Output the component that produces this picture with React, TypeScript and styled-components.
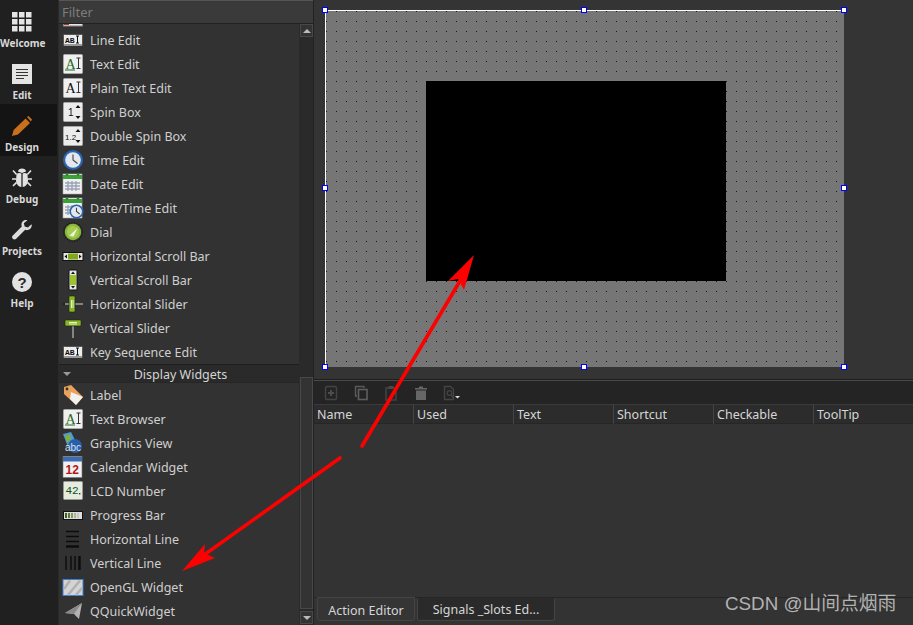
import React from "react";
import styled, { createGlobalStyle } from "styled-components";

const GlobalStyle = createGlobalStyle`
  html, body {
    margin: 0;
    padding: 0;
    background: #333;
    overflow: hidden;
  }
  * { box-sizing: border-box; }
`;

const uiFont = `"Noto Sans", "Open Sans", sans-serif`;

const Page = styled.div`
  position: relative;
  width: 913px;
  height: 625px;
  display: grid;
  grid-template-columns: 58px 256px 599px;
  overflow: hidden;
  color: #d6d6d6;
  font-family: ${uiFont};
  font-size: 12.5px;
`;

/* mode selector on the far left */
const ModeBar = styled.nav`
  display: flex;
  flex-direction: column;
  background: #202020;
`;

const ModeButton = styled.div<{ $active?: boolean }>`
  height: 52px;
  width: 44px;
  display: flex;
  flex-direction: column;
  align-items: center;
  padding-top: 12px;
  position: relative;
  z-index: 0;
  svg { display: block; }
  &::before {
    content: "";
    position: absolute;
    z-index: -1;
    left: 0;
    top: 0;
    width: 57px;
    height: 52px;
    background: ${(p) => (p.$active ? "#141414" : "transparent")};
  }
`;

const ModeLabel = styled.span`
  margin-top: 4px;
  width: 44px;
  text-align: center;
  font-size: 10px;
  line-height: 15px;
  font-weight: 700;
  color: #d8d8d8;
  white-space: nowrap;
`;

/* widget box */
const Palette = styled.aside`
  display: flex;
  flex-direction: column;
  min-height: 0;
  background: #323232;
  border-left: 1px solid #2a2a2a;
  border-right: 1px solid #222;
`;

const FilterBar = styled.div`
  height: 24px;
  flex: none;
  padding: 3px 0 0 3px;
  background: #3a3a3a;
  border-top: 1px solid #555;
  border-bottom: 1px solid #222;
  color: #7d7d7d;
  font-size: 13px;
  line-height: 17px;
`;

const PaletteBody = styled.div`
  flex: 1;
  min-height: 0;
  display: flex;
`;

const WidgetList = styled.div`
  flex: 1;
  min-width: 0;
  overflow: hidden;
  display: flex;
  flex-direction: column;
`;

const WidgetRow = styled.div<{ $clipped?: boolean }>`
  flex: none;
  height: 24px;
  display: flex;
  align-items: center;
  gap: 6px;
  padding-left: 3px;
  margin-top: ${(p) => (p.$clipped ? "-20px" : "0")};
  white-space: nowrap;
  color: #cfcfcf;
  svg { display: block; flex: none; }
`;

const Category = styled.div`
  flex: none;
  height: 19px;
  display: flex;
  align-items: center;
  justify-content: center;
  background: #2a2a2a;
  border-top: 1px solid #1e1e1e;
  border-bottom: 1px solid #262626;
  color: #d4d4d4;
  position: relative;
  padding: 1px 0 0 3px;
`;

const CategoryArrow = styled.span`
  position: absolute;
  left: 4px;
  top: 7px;
  width: 0;
  height: 0;
  border-left: 4px solid transparent;
  border-right: 4px solid transparent;
  border-top: 4px solid #999;
`;

const ScrollBar = styled.div`
  flex: none;
  width: 14px;
  display: flex;
  flex-direction: column;
  background: #2a2a2a;
  padding-bottom: 1px;
`;

const ScrollButton = styled.div`
  flex: none;
  height: 13px;
  margin-left: 1px;
  display: flex;
  align-items: center;
  justify-content: center;
  background: #333;
  border: 1px solid #484848;
`;

const ScrollGlyph = styled.span<{ $up?: boolean }>`
  width: 0;
  height: 0;
  border-left: 4px solid transparent;
  border-right: 4px solid transparent;
  ${(p) => (p.$up ? "border-bottom: 4px solid #bbb;" : "border-top: 4px solid #bbb;")}
`;

const ScrollTrack = styled.div`
  flex: 1;
  display: flex;
  flex-direction: column;
  padding: 340px 0 2px 1px;
`;

const ScrollHandle = styled.div`
  flex: 1;
  background: #333;
  border: 1px solid #484848;
`;

/* right side: form canvas on top, action editor below */
const Workspace = styled.main`
  display: flex;
  flex-direction: column;
  min-width: 0;
  background: #333;
`;

const FormArea = styled.section`
  height: 380px;
  flex: none;
  padding: 10px 0 0 11px;
  background: #343434;
  border-bottom: 1px solid #1e1e1e;
`;

const FormCanvas = styled.div`
  position: relative;
  width: 519px;
  height: 357px;
  border-top: 1px solid #fff;
  border-left: 1px solid #fff;
  background-color: #767676;
  background-image: radial-gradient(circle at 0.5px 0.5px, #161616 0.65px, transparent 0.9px);
  background-size: 10px 10px;
`;

const GlWidget = styled.div`
  position: absolute;
  left: 100px;
  top: 70px;
  width: 300px;
  height: 200px;
  background: #000;
`;

const Handle = styled.span<{ $x: string; $y: string }>`
  position: absolute;
  left: ${(p) => p.$x};
  top: ${(p) => p.$y};
  width: 6px;
  height: 6px;
  margin: -4px 0 0 -4px;
  background: #fff;
  border: 1px solid #0000ff;
`;

const ActionToolbar = styled.div`
  height: 24px;
  flex: none;
  display: flex;
  align-items: center;
  gap: 14px;
  padding-left: 9px;
  background: #242424;
  border-top: 1px solid #4a4a4a;
  svg { display: block; flex: none; }
`;

const TableHeader = styled.div`
  height: 20px;
  flex: none;
  display: grid;
  grid-template-columns: repeat(6, 100px);
  background: #2c2c2c;
  border-top: 1px solid #3a3a3a;
  border-bottom: 1px solid #262626;
`;

const HeaderCell = styled.div`
  padding-left: 3px;
  line-height: 20px;
  color: #d6d6d6;
  white-space: nowrap;
  border-right: 1px solid #444;
  &:last-child { border-right: 0; }
`;

const TableBody = styled.div`
  flex: 1;
  background: #333;
`;

const TabStrip = styled.div`
  height: 28px;
  flex: none;
  display: flex;
  align-items: flex-start;
  gap: 2px;
  padding-left: 3px;
  background: #333;
  border-top: 1px solid #262626;
`;

const Tab = styled.div<{ $active?: boolean; $width: number }>`
  width: ${(p) => p.$width}px;
  height: ${(p) => (p.$active ? 24 : 23)}px;
  margin-top: ${(p) => (p.$active ? -1 : 0)}px;
  text-align: center;
  line-height: ${(p) => (p.$active ? 26 : 22)}px;
  white-space: nowrap;
  background: ${(p) => (p.$active ? "#353535" : "#2a2a2a")};
  border: 1px solid #444;
  border-top-color: ${(p) => (p.$active ? "#444" : "#2a2a2a")};
  border-radius: 0 0 3px 3px;
  color: #d6d6d6;
`;

const Watermark = styled.div`
  position: absolute;
  left: 725px;
  top: 591px;
  font-family: "Liberation Sans", "Noto Sans CJK SC", sans-serif;
  font-size: 18.8px;
  line-height: 26px;
  color: #b2b2b2;
  white-space: nowrap;
`;

const ArrowLayer = styled.svg`
  position: absolute;
  left: 0;
  top: 0;
  pointer-events: none;
`;

/* ---- sidebar icons ---- */

const WelcomeIcon = () => (
  <svg width="20" height="20" viewBox="0 0 20 20" fill="#e4e4e4">
    {[0, 7, 14].flatMap((y) =>
      [0, 7, 14].map((x) => <rect key={`${x}-${y}`} x={x} y={y} width="5.5" height="5.5" />)
    )}
  </svg>
);

const EditIcon = () => (
  <svg width="20" height="20" viewBox="0 0 20 20">
    <rect width="20" height="20" fill="#e4e4e4" />
    <path d="M4 5.5h12M4 8.5h12M4 11.5h12M4 14.5h8" stroke="#333" strokeWidth="1" />
  </svg>
);

const PencilIcon = () => (
  <svg width="20" height="20" viewBox="0 0 20 20">
    <path d="M0 20l1.6-6L13.6 2.4l4.4 4.6L6 18.4z" fill="#c8701c" />
    <path d="M15 1l1.5-1L20 3.5 18.8 5.6z" fill="#c8701c" />
  </svg>
);

const BugIcon = () => (
  <svg width="20" height="20" viewBox="0 0 20 20" fill="#e2e2e2">
    <path d="M6 3.5C6 1.5 8 .5 10 .5s4 1 4 3L10 5z" />
    <path d="M4.6 6C6 4.8 8 4.6 9.4 5.6V19C6.6 19 4 16 4 12z" />
    <path d="M15.4 6C14 4.8 12 4.6 10.6 5.6V19C13.4 19 16 16 16 12z" />
    <path d="M1 2.5l3.6 4M19 2.5l-3.6 4M0 11h4M20 11h-4M1 18l3.6-3.6M19 18l-3.6-3.6" stroke="#e2e2e2" strokeWidth="1.6" fill="none" />
  </svg>
);

const WrenchIcon = () => (
  <svg width="20" height="20" viewBox="0 0 20 20">
    <path d="M19.5 4.2l-3.6 3.2-3.2-1 -.9-3.2L15.4.2C12.8-.6 9.6 1 9.4 4.2c0 1 .2 1.8.4 2.4L.8 15.4c-1 1 -1 2.4 0 3.4s2.4 1 3.4 0l9-9c.8.3 1.6.4 2.4.3 3-.4 4.8-3.2 3.9-5.9z" fill="#dcdcdc" />
  </svg>
);

const HelpIcon = () => (
  <svg width="20" height="20" viewBox="0 0 20 20">
    <circle cx="10" cy="10" r="10" fill="#e2e2e2" />
    <text x="10" y="15.5" textAnchor="middle" fontFamily="Liberation Sans, sans-serif" fontWeight="700" fontSize="15" fill="#2a2a2a">?</text>
  </svg>
);

/* ---- widget box icons, all on a 22px square ---- */

const Ico: React.FC<{ children: React.ReactNode }> = ({ children }) => (
  <svg width="22" height="22" viewBox="0 0 22 22">{children}</svg>
);

const MiniText: React.FC<{ x: number; y: number; size: number; fill?: string; family?: string; weight?: number; children: React.ReactNode }> = ({
  x, y, size, fill = "#111", family = "Liberation Sans, sans-serif", weight = 400, children,
}) => (
  <text x={x} y={y} fontSize={size} fill={fill} fontFamily={family} fontWeight={weight}>{children}</text>
);

const LineEditIcon = () => (
  <Ico>
    <rect x="1.5" y="5.5" width="19" height="11" rx="1" fill="#ececec" stroke="#555" />
    <rect x="2" y="15" width="18" height="2" fill="#999" />
    <MiniText x={3} y={13.5} size={8} family="Liberation Mono, monospace" weight={700}>AB</MiniText>
    <path d="M14 7h3M14 14h3M15.5 7v7" stroke="#111" strokeWidth="1" />
  </Ico>
);

const AiIcon = ({ color }: { color: string }) => (
  <Ico>
    <rect x="1.5" y="1.5" width="19" height="19" rx="1" fill="#f0f0f0" stroke="#a8a8a8" />
    <MiniText x={3.5} y={15.5} size={14} fill={color} family="Liberation Serif, serif">A</MiniText>
    {color !== "#111" && <path d="M3 17h10" stroke={color} />}
    <path d="M14.5 5h4M14.5 15.5h4M16.5 5v10.5" stroke="#333" strokeWidth="1" />
  </Ico>
);

const SpinIcon = ({ label }: { label: string }) => (
  <Ico>
    <rect x="1.5" y="1.5" width="19" height="19" rx="1" fill="#ececec" stroke="#a8a8a8" />
    <MiniText x={label.length > 1 ? 3 : 6} y={15} size={label.length > 1 ? 8 : 10}>{label}</MiniText>
    <path d="M13.5 7l2.5-3L18.5 7zM13.5 15l2.5 3 2.5-3z" fill="#111" />
  </Ico>
);

const ClockFace = ({ cx, cy, r }: { cx: number; cy: number; r: number }) => (
  <>
    <circle cx={cx} cy={cy} r={r} fill="#2a64b4" />
    <circle cx={cx} cy={cy} r={r * 0.78} fill="#e4e8ee" />
    <path d={`M${cx} ${cy - r * 0.55}V${cy}L${cx + r * 0.45} ${cy + r * 0.35}`} stroke="#444" strokeWidth="1.1" fill="none" />
  </>
);

const CalendarBase = () => (
  <>
    <rect x="1" y="1" width="19" height="20" fill="#f0f0f0" stroke="#aaa" strokeWidth="0.6" />
    <rect x="1" y="2" width="19" height="4" fill="#3aa03a" />
    <circle cx="5" cy="1.5" r="1.2" fill="#2b8030" />
    <circle cx="16" cy="1.5" r="1.2" fill="#2b8030" />
    <path d="M3 10h15M3 13h15M3 16h15M6 8v10M10 8v10M14 8v10" stroke="#9aa3b8" strokeWidth="1.4" />
  </>
);

const DateIcon = () => <Ico><CalendarBase /></Ico>;
const TimeIcon = () => <Ico><ClockFace cx={11} cy={11} r={10} /></Ico>;
const DateTimeIcon = () => (
  <Ico>
    <CalendarBase />
    <ClockFace cx={14.5} cy={14.5} r={7} />
  </Ico>
);

const DialIcon = () => (
  <Ico>
    <circle cx="11" cy="11" r="9.4" fill="none" stroke="#1a1a1a" strokeWidth="1.6" strokeDasharray="1 1.5" />
    <circle cx="11" cy="11" r="8.2" fill="#8cb83a" />
    <circle cx="11" cy="11" r="6" fill="#a4cc52" />
    <path d="M7.5 14.5L15.5 7l-4 8.5z" fill="#eef4dc" />
  </Ico>
);

const HScrollIcon = () => (
  <Ico>
    <rect x="1" y="7.5" width="20" height="8" fill="#e6e6e6" stroke="#111" />
    <rect x="6" y="8.5" width="10" height="6" fill="#7fa81e" />
    <path d="M2.5 11.5l2.5-2v4zM19.5 11.5l-2.5-2v4z" fill="#111" />
  </Ico>
);

const VScrollIcon = () => (
  <Ico>
    <rect x="7" y="1" width="8" height="20" rx="1" fill="#e6e6e6" stroke="#111" />
    <rect x="8" y="6" width="6" height="10" fill="#9cc42a" />
    <path d="M11 2.5l-2 2.5h4zM11 19.5l-2-2.5h4z" fill="#111" />
  </Ico>
);

const HSliderIcon = () => (
  <Ico>
    <path d="M1 11h20" stroke="#9a9a9a" strokeWidth="1.6" />
    <rect x="1" y="10" width="2" height="2" fill="#222" />
    <rect x="7" y="3" width="6" height="16" rx="1" fill="#8ab42a" stroke="#1a2a08" strokeWidth="0.6" />
    <path d="M9.5 7v8M11 7v8" stroke="#e6f0c8" />
  </Ico>
);

const VSliderIcon = () => (
  <Ico>
    <path d="M11 5v16" stroke="#9a9a9a" strokeWidth="1.6" />
    <rect x="3" y="3" width="16" height="6" rx="1" fill="#8ab42a" stroke="#1a2a08" strokeWidth="0.6" />
    <path d="M7 5.5h8M7 7h8" stroke="#e6f0c8" />
  </Ico>
);

const LabelIcon = () => (
  <Ico>
    <path d="M2 3l7-2 12 12-7 8L2 10z" fill="#e9a25a" />
    <path d="M9 8l12 5-7 8-6-6z" fill="#f1f1f1" />
    <circle cx="5" cy="5" r="1.4" fill="#333" />
  </Ico>
);

const GraphicsIcon = () => (
  <Ico>
    <path d="M1 2l8-2 4 8-7 7z" fill="#4f9ad8" />
    <path d="M3 4l5-2 1 5-4 4z" fill="#7fb03a" />
    <circle cx="13" cy="14" r="7" fill="#2a5ea8" />
    <MiniText x={3} y={19} size={10} fill="#d8e2f0">abc</MiniText>
  </Ico>
);

const CalendarIcon = () => (
  <Ico>
    <rect x="1" y="0.5" width="19" height="21" fill="#f1f1f1" stroke="#777" strokeWidth="0.6" />
    <rect x="1" y="1" width="19" height="4.5" fill="#3b6cb4" />
    <MiniText x={3.5} y={18} size={12} fill="#b01818" weight={700}>12</MiniText>
  </Ico>
);

const LcdIcon = () => (
  <Ico>
    <rect x="1.5" y="1.5" width="19" height="18" rx="1" fill="#e6ebe0" stroke="#999" />
    <MiniText x={3.5} y={14} size={11} fill="#14501a" family="Liberation Mono, monospace">42</MiniText>
    <rect x="17" y="13" width="1.4" height="1.4" fill="#14501a" />
  </Ico>
);

const ProgressIcon = () => (
  <Ico>
    <rect x="1.5" y="7.5" width="19" height="8" fill="#ddd" stroke="#111" />
    <rect x="3" y="9" width="2" height="5" fill="#445f20" />
    <rect x="6" y="9" width="2" height="5" fill="#5a7a2c" />
    <rect x="9" y="9" width="2" height="5" fill="#84986a" />
    <rect x="12" y="9" width="2" height="5" fill="#aab49a" />
    <rect x="15" y="9" width="2" height="5" fill="#c4c8bc" />
  </Ico>
);

const HLineIcon = () => (
  <Ico>
    <path d="M4 3.5h13M4 8.5h13M4 13.5h13" stroke="#0c0c0c" strokeWidth="1.6" />
    <path d="M4 18.5h13" stroke="#0c0c0c" strokeWidth="2.4" />
  </Ico>
);

const VLineIcon = () => (
  <Ico>
    <path d="M4 4v14M9 4v14M13 4v14" stroke="#0c0c0c" strokeWidth="1.4" />
    <path d="M17.5 4v14" stroke="#0c0c0c" strokeWidth="2.4" />
  </Ico>
);

const OpenGlIcon = () => (
  <Ico>
    <rect x="1" y="3.5" width="20" height="16" fill="#d4d4d4" stroke="#3f7fd0" strokeWidth="1" />
    <path d="M2 13L8 4.5M6 19L18 4.5M14 19l6-7" stroke="#b2b2b2" strokeWidth="2.6" />
  </Ico>
);

const QuickIcon = () => (
  <Ico>
    <path d="M3 13L20 3l-3 16-5-5z" fill="#b4b4b4" />
    <path d="M3 13l9 1 8-11z" fill="#8a8a8a" />
  </Ico>
);

const FontComboIcon = () => (
  <Ico>
    <rect x="1.5" y="1" width="19" height="20" fill="#e6e6e6" stroke="#888" />
    <rect x="2" y="17" width="5" height="3" fill="#b03030" />
  </Ico>
);

/* ---- action editor toolbar icons (disabled look) ---- */

const ToolNew = () => (
  <svg width="16" height="16" viewBox="0 0 16 16">
    <rect x="2.5" y="1.5" width="11" height="13" rx="1.5" fill="none" stroke="#444" strokeWidth="1.4" />
    <path d="M8 5v6M5 8h6" stroke="#4c4c4c" strokeWidth="2" />
  </svg>
);

const ToolCopy = () => (
  <svg width="16" height="16" viewBox="0 0 16 16" fill="none">
    <path d="M11 3V1.5H2.5V11H4" stroke="#5a5a5a" strokeWidth="1.4" />
    <rect x="5.5" y="4.5" width="8.5" height="10" stroke="#5e5e5e" strokeWidth="1.6" />
  </svg>
);

const ToolPaste = () => (
  <svg width="16" height="16" viewBox="0 0 16 16" fill="none">
    <rect x="3" y="3" width="10" height="12" stroke="#464646" strokeWidth="1.4" />
    <rect x="5.5" y="1" width="5" height="3" fill="#4a4a4a" />
  </svg>
);

const ToolDelete = () => (
  <svg width="16" height="16" viewBox="0 0 16 16">
    <path d="M2 3h12v1.5H2zM6 1.5h4V3H6z" fill="#666" />
    <path d="M3 5.5h10V15H3z" fill="#666" />
  </svg>
);

const ToolTemplate = () => (
  <svg width="18" height="16" viewBox="0 0 18 16" fill="none">
    <path d="M1.5 1.5h6l3 3v10h-9z" stroke="#444" strokeWidth="1.4" />
    <circle cx="6.5" cy="8" r="2.4" stroke="#444" strokeWidth="1.2" />
    <path d="M8 10l2.5 3" stroke="#444" strokeWidth="1.2" />
    <path d="M12 11h5l-2.5 2.6z" fill="#ddd" />
  </svg>
);

/* ---- data ---- */

const topWidgets: [string, React.FC][] = [
  ["Line Edit", LineEditIcon],
  ["Text Edit", () => <AiIcon color="#1b6b22" />],
  ["Plain Text Edit", () => <AiIcon color="#111" />],
  ["Spin Box", () => <SpinIcon label="1" />],
  ["Double Spin Box", () => <SpinIcon label="1.2" />],
  ["Time Edit", TimeIcon],
  ["Date Edit", DateIcon],
  ["Date/Time Edit", DateTimeIcon],
  ["Dial", DialIcon],
  ["Horizontal Scroll Bar", HScrollIcon],
  ["Vertical Scroll Bar", VScrollIcon],
  ["Horizontal Slider", HSliderIcon],
  ["Vertical Slider", VSliderIcon],
  ["Key Sequence Edit", LineEditIcon],
];

const displayWidgets: [string, React.FC][] = [
  ["Label", LabelIcon],
  ["Text Browser", () => <AiIcon color="#1b6b22" />],
  ["Graphics View", GraphicsIcon],
  ["Calendar Widget", CalendarIcon],
  ["LCD Number", LcdIcon],
  ["Progress Bar", ProgressIcon],
  ["Horizontal Line", HLineIcon],
  ["Vertical Line", VLineIcon],
  ["OpenGL Widget", OpenGlIcon],
  ["QQuickWidget", QuickIcon],
];

const modes: [string, React.FC, boolean?][] = [
  ["Welcome", WelcomeIcon],
  ["Edit", EditIcon],
  ["Design", PencilIcon, true],
  ["Debug", BugIcon],
  ["Projects", WrenchIcon],
  ["Help", HelpIcon],
];

const handles: [string, string][] = [
  ["0px", "0px"], ["259px", "0px"], ["519px", "0px"],
  ["0px", "178px"], ["519px", "178px"],
  ["0px", "357px"], ["259px", "357px"], ["519px", "357px"],
];

const columns = ["Name", "Used", "Text", "Shortcut", "Checkable", "ToolTip"];

const App = () => (
  <Page>
    <GlobalStyle />

    <ModeBar>
      {modes.map(([label, Icon, active]) => (
        <ModeButton key={label} $active={active}>
          <Icon />
          <ModeLabel>{label}</ModeLabel>
        </ModeButton>
      ))}
    </ModeBar>

    <Palette>
      <FilterBar>Filter</FilterBar>
      <PaletteBody>
        <WidgetList>
          <WidgetRow $clipped><FontComboIcon /></WidgetRow>
          {topWidgets.map(([label, Icon]) => (
            <WidgetRow key={label}><Icon />{label}</WidgetRow>
          ))}
          <Category><CategoryArrow />Display Widgets</Category>
          {displayWidgets.map(([label, Icon]) => (
            <WidgetRow key={label}><Icon />{label}</WidgetRow>
          ))}
        </WidgetList>
        <ScrollBar>
          <ScrollButton><ScrollGlyph $up /></ScrollButton>
          <ScrollTrack><ScrollHandle /></ScrollTrack>
          <ScrollButton><ScrollGlyph /></ScrollButton>
        </ScrollBar>
      </PaletteBody>
    </Palette>

    <Workspace>
      <FormArea>
        <FormCanvas>
          <GlWidget />
          {handles.map(([x, y]) => <Handle key={x + y} $x={x} $y={y} />)}
        </FormCanvas>
      </FormArea>
      <ActionToolbar>
        <ToolNew /><ToolCopy /><ToolPaste /><ToolDelete /><ToolTemplate />
      </ActionToolbar>
      <TableHeader>
        {columns.map((c) => <HeaderCell key={c}>{c}</HeaderCell>)}
      </TableHeader>
      <TableBody />
      <TabStrip>
        <Tab $active $width={98}>Action Editor</Tab>
        <Tab $width={138}>Signals _Slots Ed...</Tab>
      </TabStrip>
    </Workspace>

    <Watermark>CSDN @山间点烟雨</Watermark>

    {/* red annotation arrows drawn over the screenshot */}
    <ArrowLayer width="913" height="625" viewBox="0 0 913 625">
      <path d="M362 446L460 281" stroke="#f00" strokeWidth="3.6" strokeLinecap="round" />
      <path d="M474 255L448 281L458 279L464 290z" fill="#f00" />
      <path d="M340 458L204 555" stroke="#f00" strokeWidth="3.6" strokeLinecap="round" />
      <path d="M182 571L205 544L204 553L215 558z" fill="#f00" />
    </ArrowLayer>
  </Page>
);

export default App;
